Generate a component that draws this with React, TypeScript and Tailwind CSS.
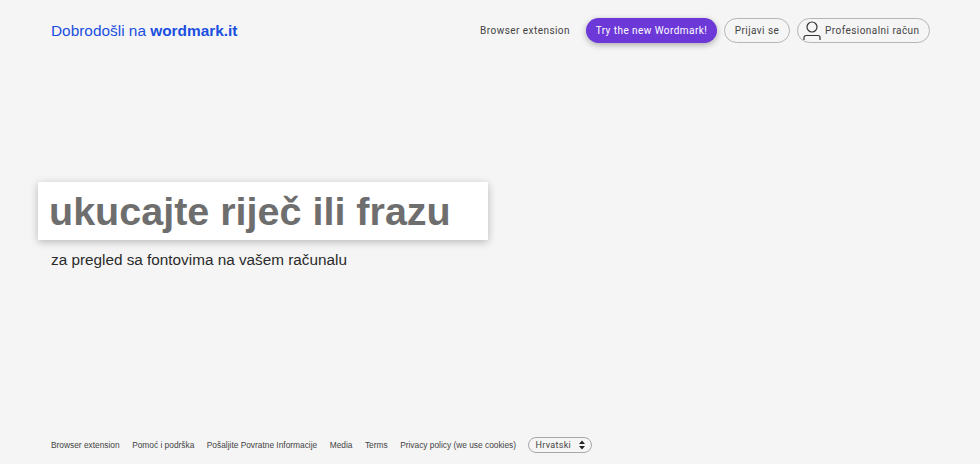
export default function App() {
  return (
    <div className="flex h-[464px] w-[980px] flex-col overflow-hidden bg-[#f5f5f5] font-['Liberation_Sans',sans-serif]">
      {/* header */}
      <header className="flex h-[61px] items-center justify-between pl-[51px] pr-[50px]">
        <h1 className="text-[15.4px] font-normal text-[#1a4fe0]">
          Dobrodošli na <b>wordmark.it</b>
        </h1>
        <nav className="flex items-center whitespace-nowrap font-['Roboto',sans-serif] text-[10px] tracking-[0.45px] text-[#444]">
          <a className="mr-[16px]">Browser extension</a>
          <button className="mr-[7px] h-[25px] w-[131px] rounded-full bg-[#6d38d8] text-white shadow-[0_2px_6px_rgba(0,0,0,0.3)]">
            Try the new Wordmark!
          </button>
          <button className="mr-[7px] h-[25px] w-[66px] rounded-full border border-[#b5b5b5]">Prijavi se</button>
          <button className="flex h-[25px] w-[133px] items-center rounded-full border border-[#b5b5b5] pl-[5px]">
            <svg width="18" height="20" viewBox="0 0 18 20" fill="none" stroke="#333" strokeWidth="1.2" className="mr-[4px]">
              <circle cx="9" cy="6" r="5" />
              <path d="M1 19v-2.5a2 2 0 0 1 2-2h12a2 2 0 0 1 2 2V19" />
            </svg>
            Profesionalni račun
          </button>
        </nav>
      </header>

      {/* word input */}
      <main className="flex-1 pl-[38px] pt-[121px]">
        <div className="flex h-[58px] w-[450px] items-center bg-white pl-[11px] pt-[1px] shadow-[0_2px_8px_rgba(0,0,0,0.25)]">
          <span className="text-[39.5px] font-bold text-[#6e6e6e]">ukucajte riječ ili frazu</span>
        </div>
        <p className="ml-[13px] mt-[9px] text-[15.3px] text-[#2b2b2b]">za pregled sa fontovima na vašem računalu</p>
      </main>

      {/* footer */}
      <footer className="flex h-[27px] items-start pl-[51px] text-[8.35px] text-[#444]">
        <div className="flex h-[16px] items-center gap-[12.5px] whitespace-nowrap">
          <a>Browser extension</a>
          <a>Pomoć i podrška</a>
          <a>Pošaljite Povratne Informacije</a>
          <a>Media</a>
          <a>Terms</a>
          <a>Privacy policy (we use cookies)</a>
          <div className="-ml-[1px] flex h-[16px] w-[64px] items-center justify-between rounded-full border border-[#a8a8a8] pl-[7px] pr-[5px] font-['Roboto',sans-serif] text-[9px] tracking-[0.3px]">
            <span className="pt-[1px]">Hrvatski</span>
            <svg width="8" height="10" viewBox="0 0 8 10" fill="#222">
              <path d="M4 0.5 7 4H1zM4 9.5 1 6h6z" />
            </svg>
          </div>
        </div>
      </footer>
    </div>
  );
}
